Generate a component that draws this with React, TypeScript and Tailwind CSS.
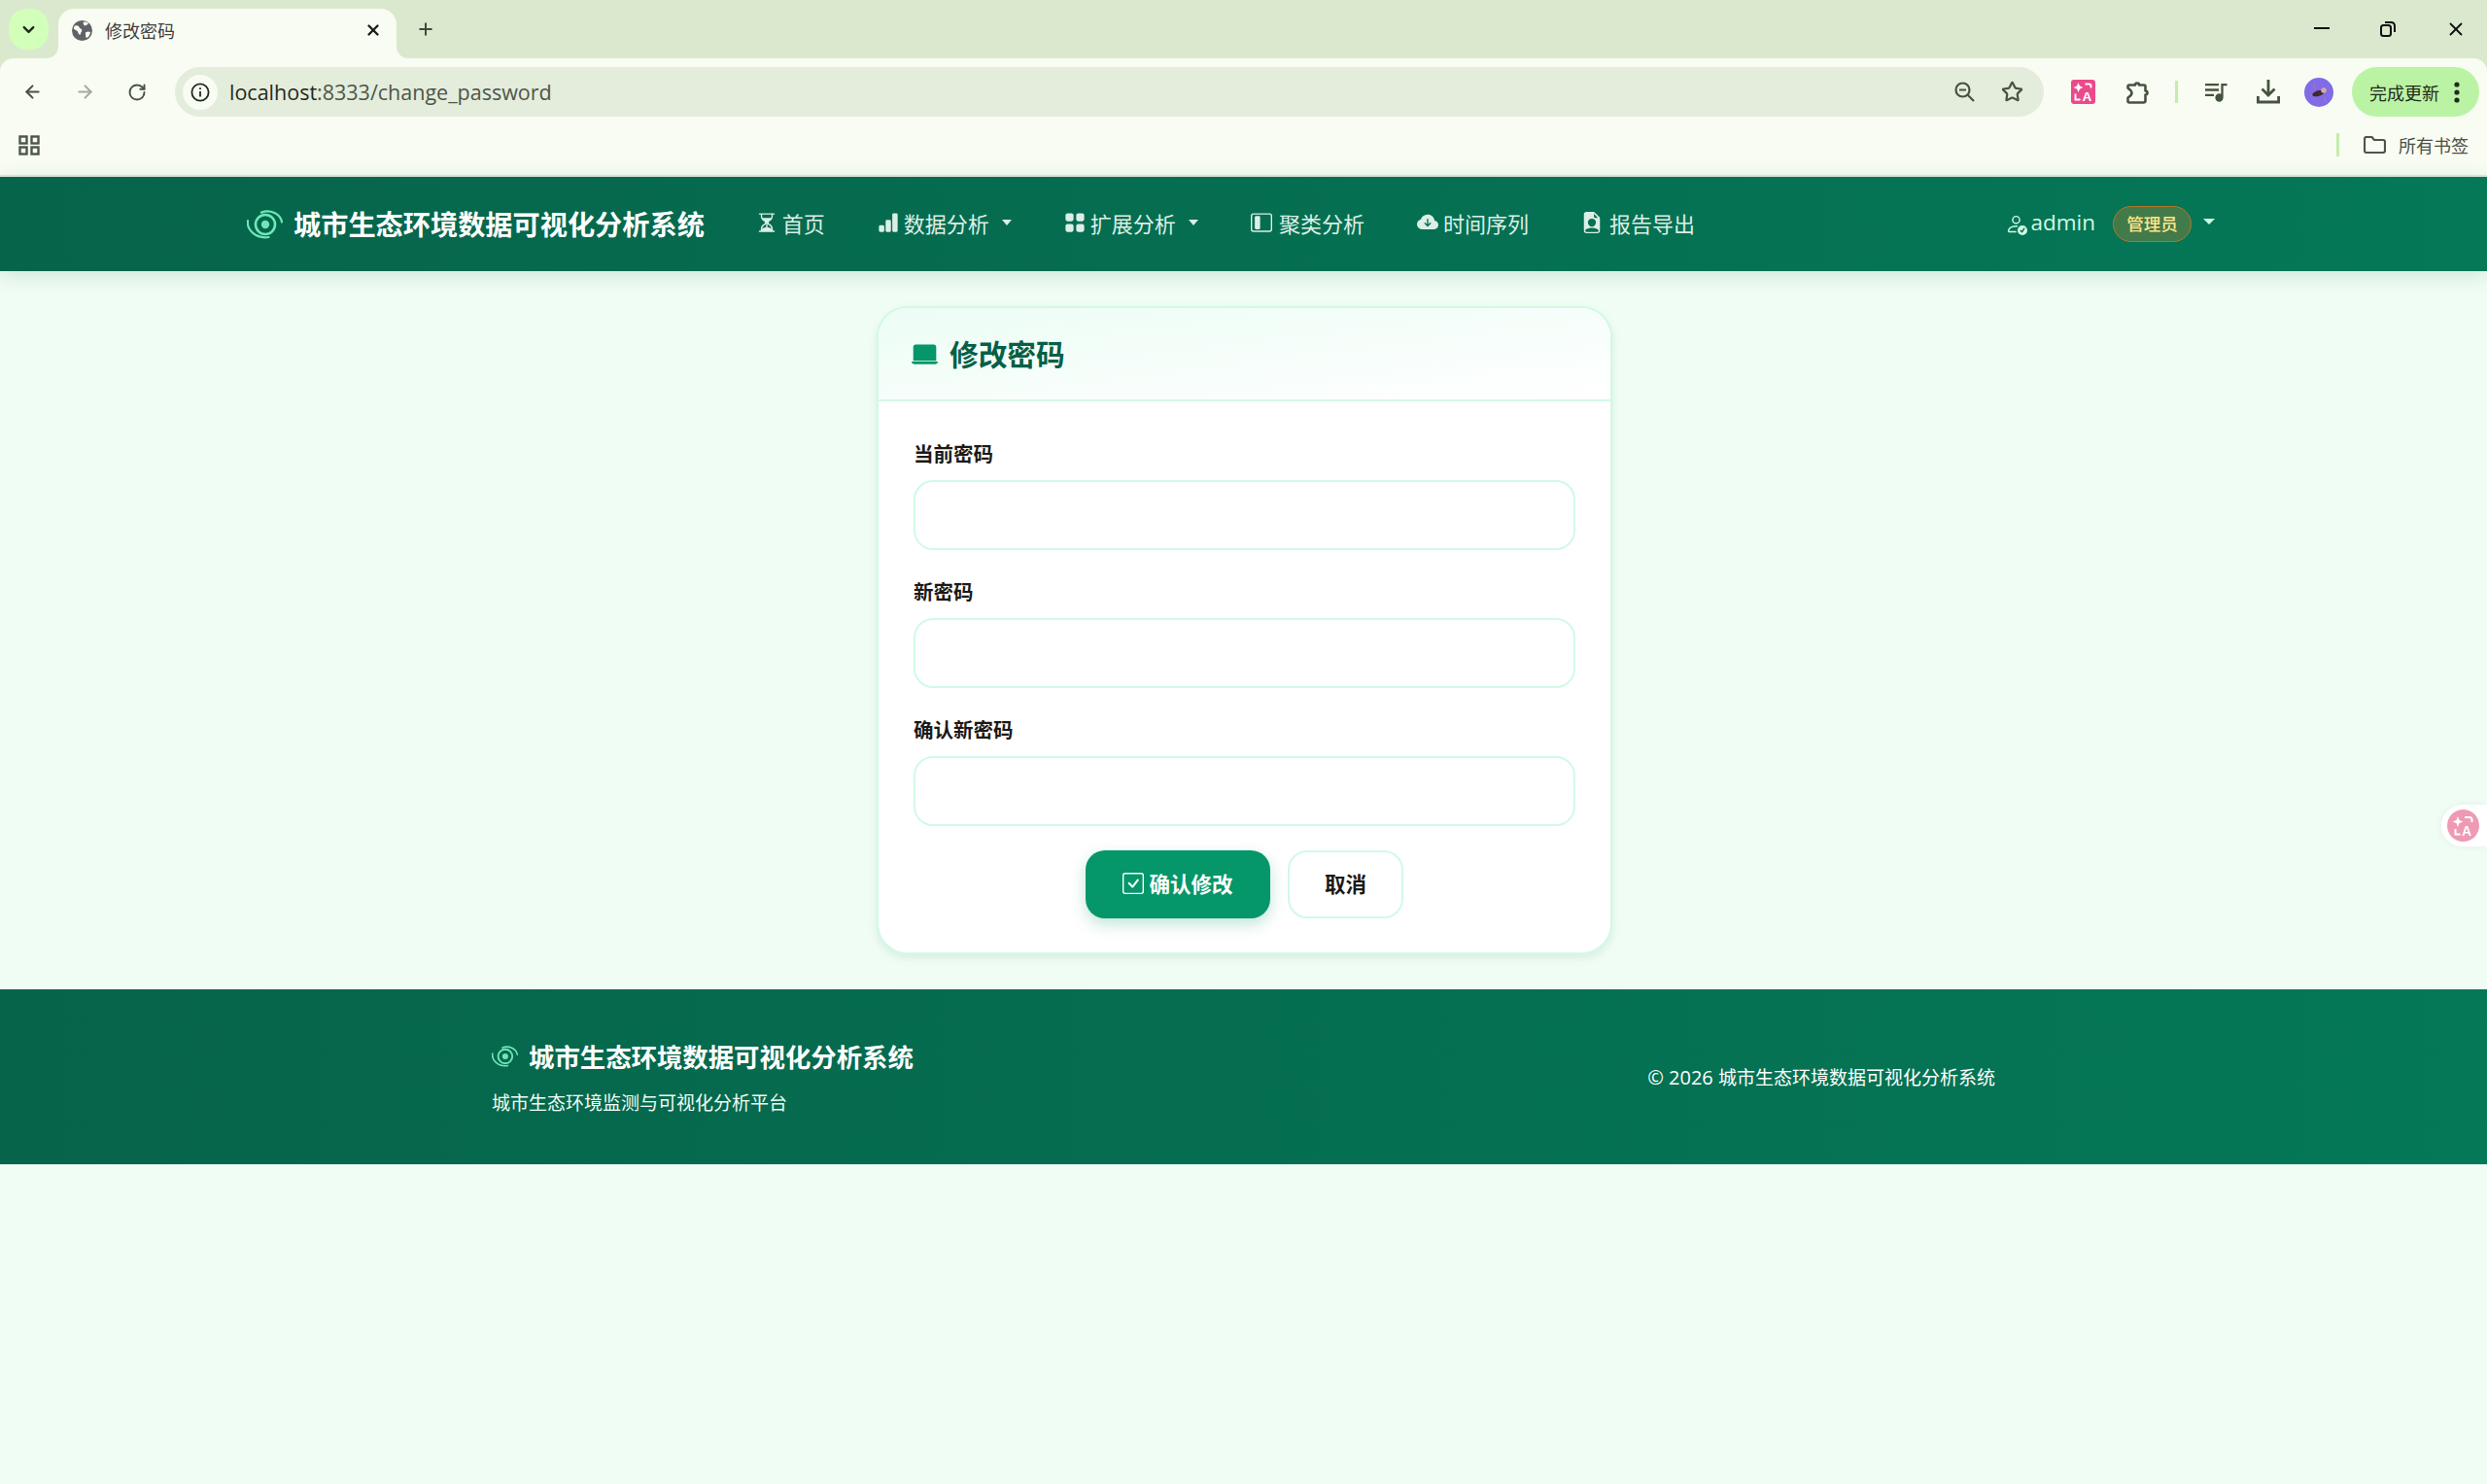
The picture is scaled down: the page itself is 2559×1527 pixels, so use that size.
import React from "react";
import {
  BsHourglassSplit, BsBarChartFill, BsGridFill, BsLayoutSidebarInset, BsCloudArrowDownFill,
  BsFileEarmarkPersonFill, BsPersonCheck, BsLaptopFill, BsCheckSquare,
} from "react-icons/bs";
import { ArrowLeft, ArrowRight, RotateCw, ChevronDown, X, Plus, Star } from "lucide-react";

const cjk = "font-['Noto_Sans_CJK_SC','Liberation_Sans',sans-serif]";

function Logo({ w, h }: { w: number; h: number }) {
  return (
    <svg width={w} height={h} viewBox="0 0 37 30" fill="none" stroke="#6ee7b7" className="shrink-0">
      <circle cx="19" cy="15" r="4.2" fill="#6ee7b7" stroke="none" />
      <circle cx="19" cy="15" r="10" strokeWidth="2.6" />
      <path d="M15 2.6C24 -0.6 34.5 3.5 36 12.5" strokeWidth="2.2" strokeLinecap="round" />
      <path d="M1 11C-0.5 20 9 30 22.5 28" strokeWidth="2.2" strokeLinecap="round" />
    </svg>
  );
}

function Caret() {
  return <span className="ml-[8px] w-0 h-0 border-x-[5.5px] border-x-transparent border-t-[6px] border-t-[#dcefe6]" />;
}

function NavItem({ icon, label, caret, gap }: { icon: React.ReactNode; label: string; caret?: boolean; gap: string }) {
  return (
    <a className={`flex items-center px-[27px] text-[22px] leading-[30px] text-[#dcefe6] ${gap}`}>
      <span className="w-[22px] h-[22px] flex items-center justify-center text-[22px]">{icon}</span>
      <span>{label}</span>
      {caret && <Caret />}
    </a>
  );
}

function Field({ label }: { label: string }) {
  return (
    <div className="mb-[27px] flex flex-col">
      <label className="text-[20.5px] leading-[30px] font-bold text-[#1c1917] mb-[13px]">{label}</label>
      <input type="password" className="h-[72px] w-full rounded-[20px] border-2 border-[#d1fae5] bg-white outline-none" />
    </div>
  );
}

function TranslateIcon() {
  return (
    <svg width="25" height="25" viewBox="0 0 25 25">
      <rect width="25" height="25" rx="3" fill="#ec4a8b" />
      <path d="M7.5 3l1.5 3.6 3.5 1.4-3.5 1.4-1.5 3.6-1.5-3.6L2.5 8 6 6.6z" fill="#fff" />
      <path d="M14.5 4.5h4a2 2 0 0 1 2 2v2M4.5 14.5v6h5" fill="none" stroke="#fff" strokeWidth="1.9" />
      <text x="11.5" y="21.5" fontSize="13.5" fontWeight="700" fill="#fff" fontFamily="Liberation Sans, sans-serif">A</text>
    </svg>
  );
}

export default function App() {
  return (
    <div className={`min-h-screen flex flex-col bg-[#f0fdf4] ${cjk}`}>
      {/* Browser tab strip */}
      <div className="h-[60px] bg-[#dae8cd] flex items-start pl-[9px] pr-[21px] shrink-0">
        <div className="mt-[9px] w-[41px] h-[42px] rounded-[18px] bg-[#d2ffb9] flex items-center justify-center">
          <ChevronDown size={19} strokeWidth={3} className="text-[#1f2a1c]" />
        </div>
        <div className="relative mt-[9px] ml-[10px] w-[348px] h-[51px] bg-[#f8fcf2] rounded-t-[16px] flex items-center pl-[14px] pr-[15px] pb-[7px]">
          <svg className="absolute left-[-12px] bottom-0" width="12" height="12" viewBox="0 0 12 12"><path d="M12 0v12H0a12 12 0 0 0 12-12z" fill="#f8fcf2" /></svg>
          <svg className="absolute right-[-12px] bottom-0" width="12" height="12" viewBox="0 0 12 12"><path d="M0 0v12h12A12 12 0 0 1 0 0z" fill="#f8fcf2" /></svg>
          <svg width="21" height="21" viewBox="0 0 21 21" className="shrink-0">
            <circle cx="10.5" cy="10.5" r="10.5" fill="#5f6368" />
            <path d="M3 5.5c2-.6 4 0 4.5 1.4.6 1.6 2.6 1.4 2.8 3 .2 1.4-1.2 2-1.2 3.4 0 1.2-1 2-2 .8-.8-1-.4-2.4-1.6-3.2C4.3 9.8 2.5 9.5 2 8.5c-.2-1 .2-2.2 1-3z" fill="#f8fcf2" />
            <path d="M12 1.5c1.4-.3 3 0 4.4.9.8.6.5 1.6-.4 1.8-1.3.3-1.6 1.5-2.9 1.1-1.1-.4-2-2.3-1.1-3.800zM14.5 12c1.5-.6 3.500-.8 4.500.2-.3 2.200-1.500 4.300-3.300 5.500-1 .5-1.700-.8-1.600-2 .1-1.300-.7-3.100.4-3.700z" fill="#f8fcf2" />
          </svg>
          <span className="ml-[13px] text-[18px] leading-[24px] text-[#3c4043] flex-1">修改密码</span>
          <X size={18} strokeWidth={3.2} className="text-[#1d1f1b]" />
        </div>
        <div className="ml-[20px] mt-[20px] h-[20px] flex items-center">
          <Plus size={20} strokeWidth={2.4} className="text-[#3f4a3a]" />
        </div>
        <div className="flex-1" />
        <div className="mt-[20px] flex items-center h-[20px]">
          <span className="w-[16px] h-[2.5px] bg-[#111] mr-[52px] mb-[2px]" />
          <svg width="16" height="16" viewBox="0 0 16 16" fill="none" stroke="#111" strokeWidth="2">
            <rect x="1" y="4" width="10" height="11" rx="2.5" />
            <path d="M5 1h6.5A3.5 3.5 0 0 1 15 4.5V11" />
          </svg>
          <X size={22} strokeWidth={2} className="ml-[51px] text-[#111]" />
        </div>
      </div>

      {/* Browser toolbar */}
      <div className="h-[60px] bg-[#dae8cd] shrink-0">
        <div className="h-full bg-[#f8fcf2] rounded-t-[14px] flex items-start pt-[9px] pl-[23px] pr-[8px]">
          <div className="h-[51px] flex items-center gap-[33px]">
            <ArrowLeft size={21} strokeWidth={2.3} className="text-[#46533f]" />
            <ArrowRight size={21} strokeWidth={2.3} className="text-[#a3aa9d]" />
            <RotateCw size={20} strokeWidth={2.3} className="text-[#46533f]" />
          </div>
          <div className="ml-[29px] h-[51px] w-[1923px] rounded-full bg-[#e4ecdc] flex items-center pl-[8px] pr-[21px]">
            <div className="w-[36px] h-[36px] rounded-full bg-[#f8fcf2] flex items-center justify-center">
              <svg width="20" height="20" viewBox="0 0 20 20" fill="none" stroke="#1f2a1c" strokeWidth="1.8">
                <circle cx="10" cy="10" r="8.6" />
                <path d="M10 9v5.5M10 5.2v1.8" />
              </svg>
            </div>
            <span className="ml-[12px] text-[21.5px] leading-[28px] text-[#1f2a1c] font-['Open_Sans',sans-serif] flex-1">
              localhost<span className="text-[#4c5648]">:8333/change_password</span>
            </span>
            <svg width="21" height="21" viewBox="0 0 21 21" fill="none" stroke="#46533f" strokeWidth="2.2">
              <circle cx="8.5" cy="8.5" r="7" />
              <path d="M5 8.5h7M13.5 13.5l6.5 6.5" />
            </svg>
            <Star size={23} strokeWidth={2.3} className="ml-[27px] text-[#46533f]" />
          </div>
          <div className="ml-[28px] h-[51px] flex items-center">
            <TranslateIcon />
            <svg className="ml-[31px]" width="24" height="24" viewBox="0 0 24 24" fill="none" stroke="#46533f" strokeWidth="2.6" strokeLinejoin="round">
              <path d="M4 4.5h6a2 2 0 0 1 4 0h5a1.5 1.5 0 0 1 1.5 1.5v4.5a2 2 0 0 1 0 4v6A2 2 0 0 1 18.500 22.500H4a1.500 1.500 0 0 1-1.500-1.500v-3.500c2.500-1.500 4-2.500 4-5s-2-3-4-5V6A1.500 1.500 0 0 1 4 4.500z" />
            </svg>
            <span className="ml-[27px] w-[3px] h-[23px] bg-[#c3eeaa]" />
            <svg className="ml-[28px]" width="23" height="20" viewBox="0 0 23 20" fill="none" stroke="#46533f" strokeWidth="2.3">
              <path d="M0 2.2h14M0 7.5h14M0 12.8h9" />
              <path d="M17.5 14.5V2.2h5" />
              <circle cx="14.5" cy="15.5" r="3" fill="#46533f" />
            </svg>
            <svg className="ml-[30px]" width="24" height="25" viewBox="0 0 24 25" fill="none" stroke="#46533f" strokeWidth="2.8">
              <path d="M12 0v15M5.5 9.5l6.5 6.5 6.5-6.5" />
              <path d="M1.4 17v6h21.2v-6" />
            </svg>
            <svg className="ml-[25px]" width="30" height="30" viewBox="0 0 30 30">
              <circle cx="15" cy="15" r="15" fill="#7f6ce6" />
              <path d="M10 6l1 6M21 19l1 7M6 17l2 2M9 23l3-2" stroke="#b06cc8" strokeWidth="1.2" />
              <ellipse cx="14.5" cy="16" rx="6.5" ry="2.8" fill="#3d2a2e" transform="rotate(-18 14.5 16)" />
              <circle cx="20" cy="13" r="2.8" fill="#d8a9a0" />
            </svg>
          </div>
          <div className="ml-[19px] h-[51px] w-[131px] rounded-full bg-[#bbf3a5] flex items-center pl-[18px]">
            <span className="text-[18px] leading-[24px] text-[#1f2a1c]">完成更新</span>
            <svg className="ml-[15px]" width="6" height="22" viewBox="0 0 6 22" fill="#1f2a1c">
              <circle cx="3" cy="3" r="2.6" /><circle cx="3" cy="11" r="2.6" /><circle cx="3" cy="19" r="2.6" />
            </svg>
          </div>
        </div>
      </div>

      {/* Bookmarks bar */}
      <div className="h-[62px] bg-[#f8fcf2] border-b-2 border-[#e2e6d9] flex items-center pl-[19px] pr-[19px] pb-[2px] shrink-0">
        <svg width="22" height="21" viewBox="0 0 22 21" fill="none" stroke="#4c5648" strokeWidth="2.4">
          <rect x="1.5" y="1.5" width="7" height="7" /><rect x="13.5" y="1.5" width="7" height="7" />
          <rect x="1.5" y="12.5" width="7" height="7" /><rect x="13.5" y="12.5" width="7" height="7" />
        </svg>
        <div className="flex-1" />
        <span className="w-[3px] h-[24px] bg-[#c3eeaa]" />
        <svg className="ml-[25px]" width="23" height="18" viewBox="0 0 23 18" fill="none" stroke="#4c5648" strokeWidth="2.2">
          <path d="M1 3a2 2 0 0 1 2-2h5.5l2.5 3h9a2 2 0 0 1 2 2v9a2 2 0 0 1-2 2H3a2 2 0 0 1-2-2z" />
        </svg>
        <span className="ml-[13px] text-[18px] leading-[24px] text-[#4a4f47]">所有书签</span>
      </div>

      {/* App navbar */}
      <nav className="relative h-[97px] bg-linear-to-r from-[#06644a] to-[#047857] shadow-[0_4px_20px_rgba(6,95,70,0.15)] flex items-center pl-[254px] shrink-0">
        <Logo w={37} h={30} />
        <span className="ml-[11px] mb-[2px] text-[28.2px] leading-[40px] font-bold text-white">城市生态环境数据可视化分析系统</span>
        <div className="ml-[26px] mb-[3px] flex items-center">
          <NavItem gap="gap-[5px]" icon={<BsHourglassSplit />} label="首页" />
          <NavItem gap="gap-[5px]" icon={<BsBarChartFill />} label="数据分析" caret />
          <NavItem gap="gap-[5px]" icon={<BsGridFill />} label="扩展分析" caret />
          <NavItem gap="gap-[7px]" icon={<BsLayoutSidebarInset />} label="聚类分析" />
          <NavItem gap="gap-[5px]" icon={<BsCloudArrowDownFill />} label="时间序列" />
          <NavItem gap="gap-[7px]" icon={<BsFileEarmarkPersonFill />} label="报告导出" />
        </div>
        <div className="flex-1" />
        <div className="mr-[280px] flex items-center">
          <BsPersonCheck size={23} className="text-[#d1fae5]" />
          <span className="ml-[3px] mb-[3px] text-[22.5px] leading-[32px] text-[#d1fae5] font-['Open_Sans',sans-serif]">admin</span>
          <span className="ml-[18px] h-[37px] w-[81px] rounded-full bg-[#437a4a] border border-[#b4762a] text-[#fde68a] text-[17.5px] flex items-center justify-center font-medium">管理员</span>
          <span className="ml-[12px] mb-[6px] w-0 h-0 border-x-[6px] border-x-transparent border-t-[6px] border-t-[#d1fae5]" />
        </div>
      </nav>

      {/* Main */}
      <main className="py-[36px] pl-[2px] flex justify-center">
        <div className="w-[757px] rounded-[32px] border-2 border-[#d1fae5] bg-white shadow-[0_4px_10px_rgba(6,95,70,0.1)] overflow-hidden">
          <div className="h-[96px] px-[34px] flex items-center gap-[12px] border-b-2 border-[#d1fae5] bg-linear-to-br from-[#ecfdf5] to-white">
            <BsLaptopFill size={27} className="text-[#059669]" />
            <h1 className="text-[29.7px] leading-[40px] font-bold text-[#065f46]">修改密码</h1>
          </div>
          <div className="px-[36px] pt-[38px] pb-[35px]">
            <Field label="当前密码" />
            <Field label="新密码" />
            <Field label="确认新密码" />
            <div className="-mt-[2px] flex justify-center gap-[18px]">
              <button className="h-[70px] w-[190px] pb-[2px] rounded-[20px] bg-[#059669] text-white text-[21.5px] font-bold flex items-center justify-center gap-[5px] shadow-[0_6px_16px_rgba(5,150,105,0.25)]">
                <BsCheckSquare size={22} />
                确认修改
              </button>
              <button className="h-[70px] w-[119px] pb-[2px] rounded-[20px] bg-white border-2 border-[#d1fae5] text-[#1c1917] text-[21.5px] font-bold">取消</button>
            </div>
          </div>
        </div>
      </main>

      {/* Footer */}
      <footer className="h-[180px] bg-linear-to-r from-[#06644a] to-[#047857] flex items-center justify-center shrink-0">
        <div className="w-[1547px] flex items-center justify-between">
          <div className="flex flex-col">
            <div className="flex items-center gap-[11px]">
              <Logo w={27} h={22} />
              <span className="text-[26.4px] leading-[36px] font-bold text-white">城市生态环境数据可视化分析系统</span>
            </div>
            <p className="mt-[15px] text-[19px] leading-[28px] text-[#f0fdf4]">城市生态环境监测与可视化分析平台</p>
          </div>
          <p className="text-[19px] leading-[28px] text-white">
            <span className="text-[20px] font-['Open_Sans',sans-serif]">© 2026 </span>城市生态环境数据可视化分析系统
          </p>
        </div>
      </footer>

      {/* Floating translate widget */}
      <div className="fixed right-0 top-[828px] w-[47px] h-[43px] rounded-l-full bg-white shadow-[0_0_8px_rgba(0,0,0,0.06)] flex items-center pl-[6px]">
        <svg width="33" height="33" viewBox="0 0 33 33">
          <circle cx="16.5" cy="16.5" r="16.5" fill="#ee9ab4" />
          <path d="M11 7l1.5 4 4 1.5-4 1.5-1.5 4-1.5-4-4-1.5 4-1.5z" fill="#fff" />
          <path d="M18 8h5a2.5 2.5 0 0 1 2.5 2.5V13M8.5 20v5.5h5" fill="none" stroke="#fff" strokeWidth="2" />
          <text x="15" y="27" fontSize="14" fontWeight="700" fill="#fff" fontFamily="Liberation Sans, sans-serif">A</text>
        </svg>
      </div>
    </div>
  );
}
